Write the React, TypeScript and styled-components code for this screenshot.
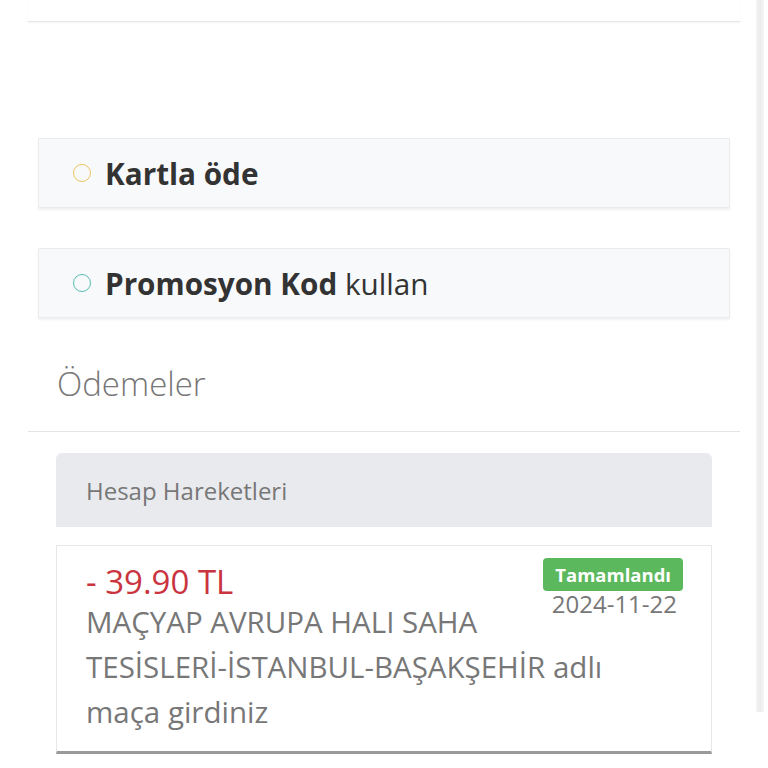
import React from "react";
import styled, { createGlobalStyle } from "styled-components";

const Global = createGlobalStyle`
  html, body { margin: 0; padding: 0; background: #fff; }
  body { font-family: "Open Sans", "Noto Sans", sans-serif; }
`;

const Page = styled.div`
  display: flex;
  width: 768px;
  height: 768px;
  overflow: hidden;
  background: #fff;
`;

const Main = styled.div`
  width: 756px;
  display: flex;
  flex-direction: column;
`;

const Scroll = styled.div`
  width: 8px;
  height: 712px;
  background: linear-gradient(to right, #f5f5f5, #ebebeb 50%, #f5f5f5);
`;

const Column = styled.div`
  margin-left: 28px;
  width: 712px;
  display: flex;
  flex-direction: column;
`;

const TopEdge = styled.div`
  height: 21px;
  border-bottom: 1px solid #e6e6e6;
  box-shadow: 0 1px 2px rgba(0, 0, 0, 0.04);
`;

const OptionCard = styled.div<{ $top: number }>`
  margin: ${(p) => p.$top}px 10px 0;
  height: 70px;
  box-sizing: border-box;
  background: #f8f9fa;
  border: 1px solid #ececec;
  box-shadow: 0 2px 2px rgba(0, 0, 0, 0.06);
  display: flex;
  align-items: center;
  padding-left: 34px;
  gap: 14px;
`;

const Radio = styled.span<{ $color: string }>`
  width: 18px;
  height: 18px;
  box-sizing: border-box;
  border-radius: 50%;
  border: 1.5px solid ${(p) => p.$color};
  flex: none;
`;

const OptionText = styled.div`
  font-size: 29.7px;
  color: #333;
  line-height: 1;
  padding-top: 1px;
`;

const Strong = styled.b`
  font-weight: 700;
`;

const Title = styled.div`
  margin: 44px 0 0 29px;
  font-size: 33px;
  font-weight: 300;
  color: #777;
  line-height: 44px;
`;

const Rule = styled.div`
  margin-top: 25px;
  height: 1px;
  background: #e4e4e4;
`;

const ListHeader = styled.div`
  margin: 21px 28px 0;
  height: 74px;
  background: #e9eaee;
  border-radius: 6px 6px 0 0;
  display: flex;
  align-items: center;
  padding-left: 30px;
  font-size: 24px;
  color: #777;
`;

const Item = styled.div`
  margin: 18px 28px 0;
  height: 209px;
  box-sizing: border-box;
  border: 1px solid #e6e6e6;
  border-bottom: 3px solid #9a9a9a;
  background: #fff;
  padding: 12px 28px 0 29px;
  position: relative;
`;

const Amount = styled.div`
  font-size: 33px;
  color: #c9343f;
  line-height: 48px;
`;

const Side = styled.div`
  position: absolute;
  top: 12px;
  right: 28px;
  display: flex;
  flex-direction: column;
  align-items: flex-end;
`;

const Badge = styled.span`
  background: #5cb85c;
  color: #fff;
  font-weight: 700;
  font-size: 18.5px;
  line-height: 33px;
  padding: 0 12px;
  border-radius: 4px;
`;

const DateText = styled.div`
  font-size: 24px;
  color: #777;
  line-height: 26px;
  margin-right: 6px;
`;

const Desc = styled.div`
  font-size: 29.5px;
  color: #777;
  line-height: 45px;
  margin-top: -7px;
  max-width: 560px;
`;

const NoWrap = styled.span`
  white-space: nowrap;
`;

export default function App() {
  return (
    <Page>
      <Global />
      <Main>
        <Column>
          <TopEdge />
          <OptionCard $top={116}>
            <Radio $color="#ecc45c" />
            <OptionText>
              <Strong>Kartla öde</Strong>
            </OptionText>
          </OptionCard>
          <OptionCard $top={40}>
            <Radio $color="#5bbcb4" />
            <OptionText>
              <Strong>Promosyon Kod</Strong> kullan
            </OptionText>
          </OptionCard>
          <Title>Ödemeler</Title>
          <Rule />
          <ListHeader>Hesap Hareketleri</ListHeader>
          <Item>
            <Amount>- 39.90 TL</Amount>
            <Side>
              <Badge>Tamamlandı</Badge>
              <DateText>2024-11-22</DateText>
            </Side>
            <Desc>
              MAÇYAP AVRUPA HALI SAHA <NoWrap>TESİSLERİ-İSTANBUL-BAŞAKŞEHİR</NoWrap> adlı maça girdiniz
            </Desc>
          </Item>
        </Column>
      </Main>
      <Scroll />
    </Page>
  );
}
